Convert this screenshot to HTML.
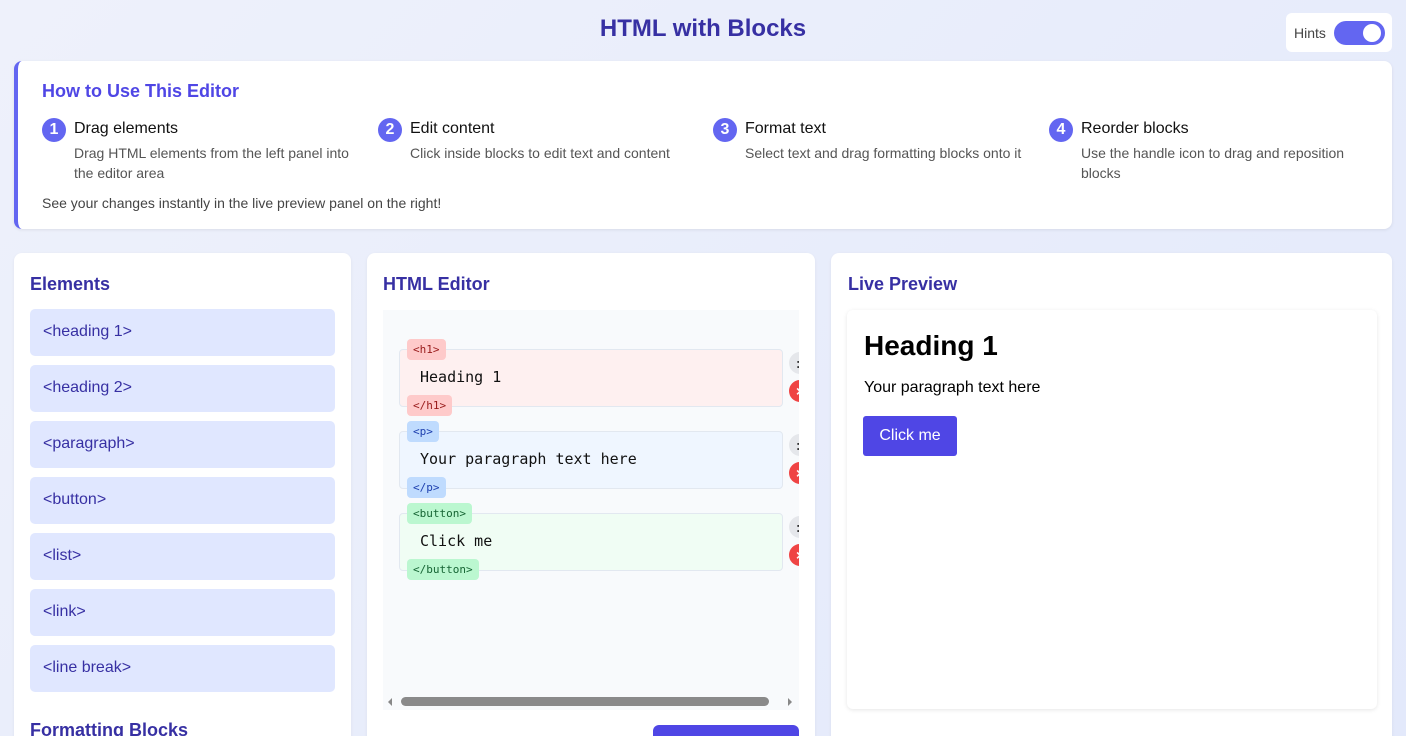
<!DOCTYPE html>
<html><head><meta charset="utf-8"><style>
*{box-sizing:border-box;margin:0;padding:0}
html{height:736px;overflow:hidden}
body{width:1406px;height:736px;overflow:hidden;background:linear-gradient(135deg,#eef1fb,#e3e9fb);font-family:"Liberation Sans",sans-serif;position:relative}
.abs{position:absolute}
h1{position:absolute;left:0;width:1406px;top:15px;text-align:center;font-size:24px;color:#3730a3;font-weight:bold}
.hints{left:1286px;top:13px;width:106px;height:39px;background:#fff;border-radius:6px}
.hints span{position:absolute;left:8px;top:12px;font-size:14px;color:#444}
.tog{position:absolute;left:48px;top:8px;width:51px;height:24px;border-radius:12px;background:#6366f1}
.tog:after{content:"";position:absolute;right:4px;top:3px;width:18px;height:18px;border-radius:50%;background:#fff}
.guide{left:14px;top:61px;width:1378px;height:168px;background:#fff;border-radius:8px;border-left:4px solid #6366f1;box-shadow:0 1px 3px rgba(0,0,0,.08)}
.guide h2{position:absolute;left:24px;top:20px;font-size:18px;color:#4f46e5}
.step{position:absolute;top:57px;width:310px}
.num{position:absolute;left:0;top:0;width:24px;height:24px;border-radius:50%;background:#6366f1;color:#fff;font-weight:bold;font-size:16px;text-align:center;line-height:24px}
.st{position:absolute;left:32px;top:2px;font-size:16px;color:#111}
.sd{position:absolute;left:32px;top:25px;font-size:14px;color:#555;line-height:20px}
.foot{position:absolute;left:24px;top:134px;font-size:14px;color:#444}
.panel{background:#fff;border-radius:8px;top:253px;height:500px;box-shadow:0 1px 3px rgba(0,0,0,.06)}
.panel h3{position:absolute;left:16px;top:21px;font-size:18px;color:#3730a3}
.el{position:absolute;left:16px;width:305px;height:47px;background:#e0e7ff;border-radius:5px;color:#3730a3;font-size:16px;padding:14px 13px}
.ed{position:absolute;left:16px;top:57px;width:416px;height:400px;background:#f8fafc;overflow:hidden}
.blk{position:absolute;left:16px;width:384px;height:58px;border:1px solid #e2e8f0;border-radius:4px;font-family:"DejaVu Sans Mono","Liberation Mono",monospace;font-size:15px;padding:18px 20px;color:#111}
.tag{position:absolute;left:24px;font-family:"DejaVu Sans Mono",monospace;font-size:11px;height:21px;line-height:21px;padding:0 6px;border-radius:4px}
.ctl{position:absolute;left:406px;width:22px;height:22px;border-radius:50%;font-size:14px;font-weight:bold;line-height:22px;padding-left:7px}
</style></head><body>
<h1>HTML with Blocks</h1>
<div class="abs hints"><span>Hints</span><div class="tog"></div></div>
<div class="abs guide">
<h2>How to Use This Editor</h2>
<div class="step" style="left:24px"><div class="num">1</div><div class="st">Drag elements</div><div class="sd">Drag HTML elements from the left panel into the editor area</div></div>
<div class="step" style="left:360px"><div class="num">2</div><div class="st">Edit content</div><div class="sd">Click inside blocks to edit text and content</div></div>
<div class="step" style="left:695px"><div class="num">3</div><div class="st">Format text</div><div class="sd">Select text and drag formatting blocks onto it</div></div>
<div class="step" style="left:1031px"><div class="num">4</div><div class="st">Reorder blocks</div><div class="sd">Use the handle icon to drag and reposition blocks</div></div>
<div class="foot">See your changes instantly in the live preview panel on the right!</div>
</div>
<div class="abs panel" style="left:14px;width:337px">
<h3>Elements</h3>
<div class="el" style="top:56px">&lt;heading 1&gt;</div>
<div class="el" style="top:112px">&lt;heading 2&gt;</div>
<div class="el" style="top:168px">&lt;paragraph&gt;</div>
<div class="el" style="top:224px">&lt;button&gt;</div>
<div class="el" style="top:280px">&lt;list&gt;</div>
<div class="el" style="top:336px">&lt;link&gt;</div>
<div class="el" style="top:392px">&lt;line break&gt;</div>
<h3 style="top:467px">Formatting Blocks</h3>
</div>
<div class="abs panel" style="left:367px;width:448px;overflow:hidden">
<h3>HTML Editor</h3>
<div class="ed">
<div class="blk" style="top:39px;background:#fef0f0">Heading 1</div>
<div class="tag" style="top:29px;background:#fecaca;color:#991b1b">&lt;h1&gt;</div>
<div class="tag" style="top:85px;background:#fecaca;color:#991b1b">&lt;/h1&gt;</div>
<div class="blk" style="top:121px;background:#eff6ff">Your paragraph text here</div>
<div class="tag" style="top:111px;background:#bfdbfe;color:#1e40af">&lt;p&gt;</div>
<div class="tag" style="top:167px;background:#bfdbfe;color:#1e40af">&lt;/p&gt;</div>
<div class="blk" style="top:203px;background:#f0fdf4">Click me</div>
<div class="tag" style="top:193px;background:#bbf7d0;color:#166534">&lt;button&gt;</div>
<div class="tag" style="top:249px;background:#bbf7d0;color:#166534">&lt;/button&gt;</div>
<div class="ctl" style="top:42px;background:#e5e7eb;color:#333">:</div><div class="ctl" style="top:70px;background:#ef4444;color:#fff">×</div>
<div class="ctl" style="top:124px;background:#e5e7eb;color:#333">:</div><div class="ctl" style="top:152px;background:#ef4444;color:#fff">×</div>
<div class="ctl" style="top:206px;background:#e5e7eb;color:#333">:</div><div class="ctl" style="top:234px;background:#ef4444;color:#fff">×</div>
<div class="abs" style="left:18px;top:387px;width:368px;height:9px;border-radius:5px;background:#8a8a8a"></div>
<div class="abs" style="left:5px;top:388px;border:4px solid transparent;border-right:4px solid #888;border-left:0"></div>
<div class="abs" style="left:405px;top:388px;border:4px solid transparent;border-left:4px solid #888;border-right:0"></div>
</div>
<div class="abs" style="left:286px;top:472px;width:146px;height:40px;background:#4f46e5;border-radius:6px"></div>
</div>
<div class="abs panel" style="left:831px;width:561px">
<h3 style="left:17px">Live Preview</h3>
<div class="abs" style="left:16px;top:57px;width:530px;height:399px;background:#fff;border-radius:6px;box-shadow:0 1px 4px rgba(0,0,0,.1)">
<div class="abs" style="left:17px;top:20px;font-size:28px;font-weight:bold;color:#000">Heading 1</div>
<div class="abs" style="left:17px;top:69px;font-size:16px;color:#000">Your paragraph text here</div>
<div class="abs" style="left:16px;top:106px;width:94px;height:40px;background:#4f46e5;border-radius:3px;color:#fff;font-size:16px;text-align:center;line-height:40px">Click me</div>
</div>
</div>
</body></html>
